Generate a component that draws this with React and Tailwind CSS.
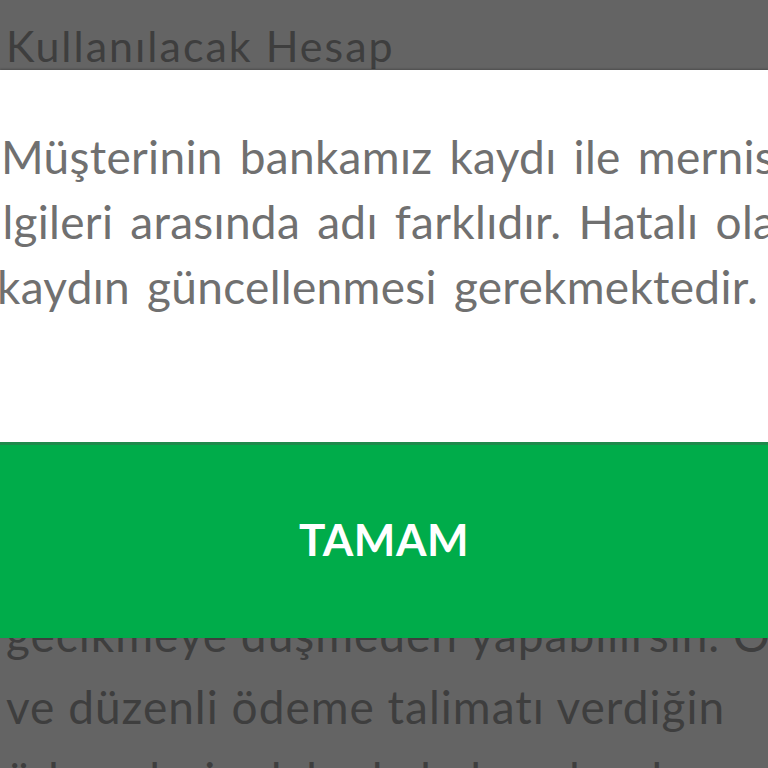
export default function App() {
  return (
    <div className="relative h-[768px] w-[768px] overflow-hidden bg-[#646464] font-['Lato','Open_Sans',sans-serif]">
      {/* Page behind the dialog */}
      <div className="flex h-full flex-col justify-between text-[#3e3e3e]">
        <div className="whitespace-nowrap pl-[6px] pt-[18px] text-[43px] leading-[56px] tracking-[2px]">
          Kullanılacak Hesap
        </div>
        <div className="-mb-[47px] whitespace-nowrap pl-[6px] text-[46px] leading-[72px] tracking-[1px]">
          <div>gecikmeye düşmeden yapabilirsin. Ödeme</div>
          <div>ve düzenli ödeme talimatı verdiğin</div>
          <div>ödemelerin dahada kolay olacak</div>
        </div>
      </div>

      {/* Dialog */}
      <div className="absolute inset-x-0 top-[70px] shadow-[0_-1px_2px_rgba(0,0,0,0.25)]">
        <div className="h-[372px] bg-white pt-[54px] text-[46px] leading-[65px] tracking-[0.3px] text-[#707070] [word-spacing:5px]">
          <div className="whitespace-nowrap pl-[1px]">Müşterinin bankamız kaydı ile mernis</div>
          <div className="-ml-[35px] whitespace-nowrap">bilgileri arasında adı farklıdır. Hatalı olan</div>
          <div className="-ml-[3px] whitespace-nowrap">kaydın güncellenmesi gerekmektedir.</div>
        </div>
        <div className="flex h-[196px] items-center justify-center border-t-[3px] border-[#1f8a4c] bg-[#00ac4a] pb-[6px]">
          <span className="text-[44px] font-bold tracking-[0.5px] text-white">TAMAM</span>
        </div>
      </div>
    </div>
  );
}
